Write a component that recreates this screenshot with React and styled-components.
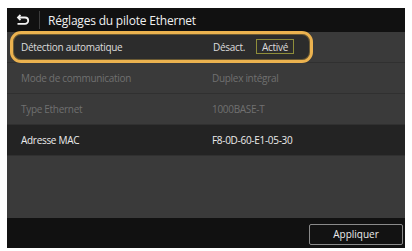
import styled, { createGlobalStyle } from 'styled-components'

const Global = createGlobalStyle`
  body {
    margin: 0;
    background: #ffffff;
    font-family: "Open Sans", "Liberation Sans", sans-serif;
  }
`;

const Screen = styled.div`
  margin: 8px 0 0 7px;
  width: 398px;
  height: 240px;
  background-color: #3a3a3a;
  display: flex;
  flex-direction: column;
  overflow: hidden;
`;
const Header = styled.div`
  height: 24px;
  background-color: #111111;
  display: flex;
  align-items: center;
  flex-shrink: 0;
`;
const BackButton = styled.div`
  width: 32px;
  height: 18px;
  border-right: 1px solid #3c3c3c;
  display: flex;
  align-items: center;
  justify-content: center;
`;
const Title = styled.div`
  padding-left: 8px;
  color: #f0f0f0;
  font-size: 12px;
  letter-spacing: -0.2px;
`;
const List = styled.div`
  flex: 1;
  display: flex;
  flex-direction: column;
`;
const Row = styled.div`
  height: 31px;
  display: flex;
  align-items: center;
  border-bottom: 1px solid #303030;
  box-sizing: border-box;
  background-color: ${p => (p.$dark ? '#232323' : 'transparent')};
  color: ${p => (p.$disabled ? '#707070' : '#ececec')};
  font-size: 10px;
  letter-spacing: -0.3px;
`;
const Label = styled.div`
  width: 191px;
  padding-left: 14px;
`;
const Value = styled.div`
  flex: 1;
`;
const Selected = styled.div`
  margin-left: 3px;
  width: 303px;
  height: 32px;
  margin-top: -1px;
  box-sizing: border-box;
  border: 3px solid #ebb24f;
  border-radius: 11px;
  box-shadow: inset 0 0 0 1px #6b5a33;
  background-color: #2c2c2c;
  display: flex;
  align-items: center;
  color: #dcdcdc;
`;
const SelLabel = styled.div`
  width: 186px;
  padding-left: 8px;
`;
const Option = styled.div`
  height: 15px;
  padding: 0 5px;
  display: flex;
  align-items: center;
  box-sizing: border-box;
  border: 1px solid ${p => (p.$on ? '#8f8d3a' : 'transparent')};
  margin-right: 5px;
`;
const Filler = styled.div`
  flex: 1;
`;
const Footer = styled.div`
  height: 30px;
  background-color: #111111;
  display: flex;
  align-items: center;
  justify-content: flex-end;
  padding-right: 2px;
  flex-shrink: 0;
`;
const ApplyButton = styled.div`
  width: 94px;
  height: 21px;
  box-sizing: border-box;
  border: 1px solid #8a8a8a;
  border-radius: 2px;
  background-color: #121212;
  color: #ececec;
  font-size: 10px;
  display: flex;
  align-items: center;
  justify-content: center;
  margin-top: 2px;
`;

const BackIcon = () => (
  <svg width="14" height="12" viewBox="0 0 14 12" fill="none" stroke="#f2f2f2" strokeWidth="1.8">
    <path d="M2 3.5 H9 a3.2 3.2 0 0 1 0 6.4 H1.5" />
    <path d="M4.5 1 L2 3.5 L4.5 6" />
  </svg>
);

export default function App() {
  return (
    <>
      <Global />
      <Screen>
        <Header>
          <BackButton><BackIcon /></BackButton>
          <Title>Réglages du pilote Ethernet</Title>
        </Header>
        <List>
          <Row>
            <Selected>
              <SelLabel>Détection automatique</SelLabel>
              <Option>Désact.</Option>
              <Option $on>Activé</Option>
            </Selected>
          </Row>
          <Row $disabled>
            <Label>Mode de communication</Label>
            <Value>Duplex intégral</Value>
          </Row>
          <Row $disabled>
            <Label>Type Ethernet</Label>
            <Value>1000BASE-T</Value>
          </Row>
          <Row $dark>
            <Label>Adresse MAC</Label>
            <Value>F8-0D-60-E1-05-30</Value>
          </Row>
          <Filler />
        </List>
        <Footer>
          <ApplyButton>Appliquer</ApplyButton>
        </Footer>
      </Screen>
    </>
  )
}
